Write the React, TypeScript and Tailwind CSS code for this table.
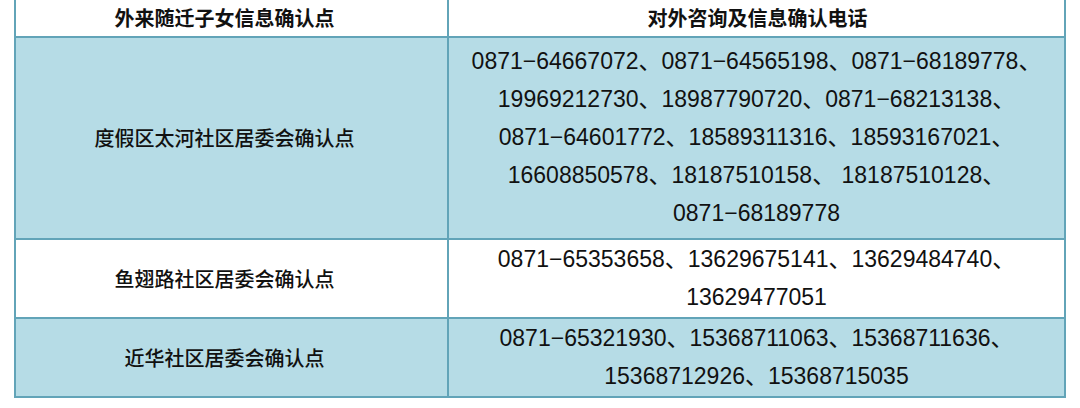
const rows = [
  {
    name: "度假区太河社区居委会确认点",
    phones: [
      "0871−64667072、0871−64565198、0871−68189778、",
      "19969212730、18987790720、0871−68213138、",
      "0871−64601772、18589311316、18593167021、",
      "16608850578、18187510158、 18187510128、",
      "0871−68189778",
    ],
    height: "h-[200px]",
    blue: true,
  },
  {
    name: "鱼翅路社区居委会确认点",
    phones: ["0871−65353658、13629675141、13629484740、", "13629477051"],
    height: "h-[79px]",
    blue: false,
  },
  {
    name: "近华社区居委会确认点",
    phones: ["0871−65321930、15368711063、15368711636、", "15368712926、15368715035"],
    height: "h-[79px]",
    blue: true,
  },
];

export default function App() {
  return (
    <div className="w-[1080px] h-[408px] bg-white pl-[14px] text-[#111111] [font-family:'Liberation_Sans','Noto_Sans_CJK_SC',sans-serif]">
      <div className="w-[1052px] border-x-2 border-b-2 border-[#62a4b8]">
        <div className="flex h-[38px] border-b-2 border-[#62a4b8] bg-white text-[20px] font-bold [font-family:'Noto_Sans_CJK_SC',sans-serif]">
          <div className="flex w-[433px] items-center justify-center border-r-2 border-[#62a4b8] pr-[14px]">
            外来随迁子女信息确认点
          </div>
          <div className="flex flex-1 items-center justify-center pl-[2px]">
            对外咨询及信息确认电话
          </div>
        </div>
        {rows.map((r, i) => (
          <div
            key={r.name}
            className={`flex ${r.height} ${i > 0 ? "border-t-2 border-[#62a4b8]" : ""} ${
              r.blue ? "bg-[#b6dce6]" : "bg-white"
            }`}
          >
            <div className="flex w-[433px] items-center justify-center border-r-2 border-[#62a4b8] pr-[14px] text-[20px] font-medium [font-family:'Noto_Sans_CJK_SC',sans-serif]">
              {r.name}
            </div>
            <div className="flex flex-1 flex-col items-center justify-center pb-[2px] text-[23px] leading-[38px]">
              {r.phones.map((p) => (
                <div key={p} className="whitespace-pre">
                  {p}
                </div>
              ))}
            </div>
          </div>
        ))}
      </div>
    </div>
  );
}
